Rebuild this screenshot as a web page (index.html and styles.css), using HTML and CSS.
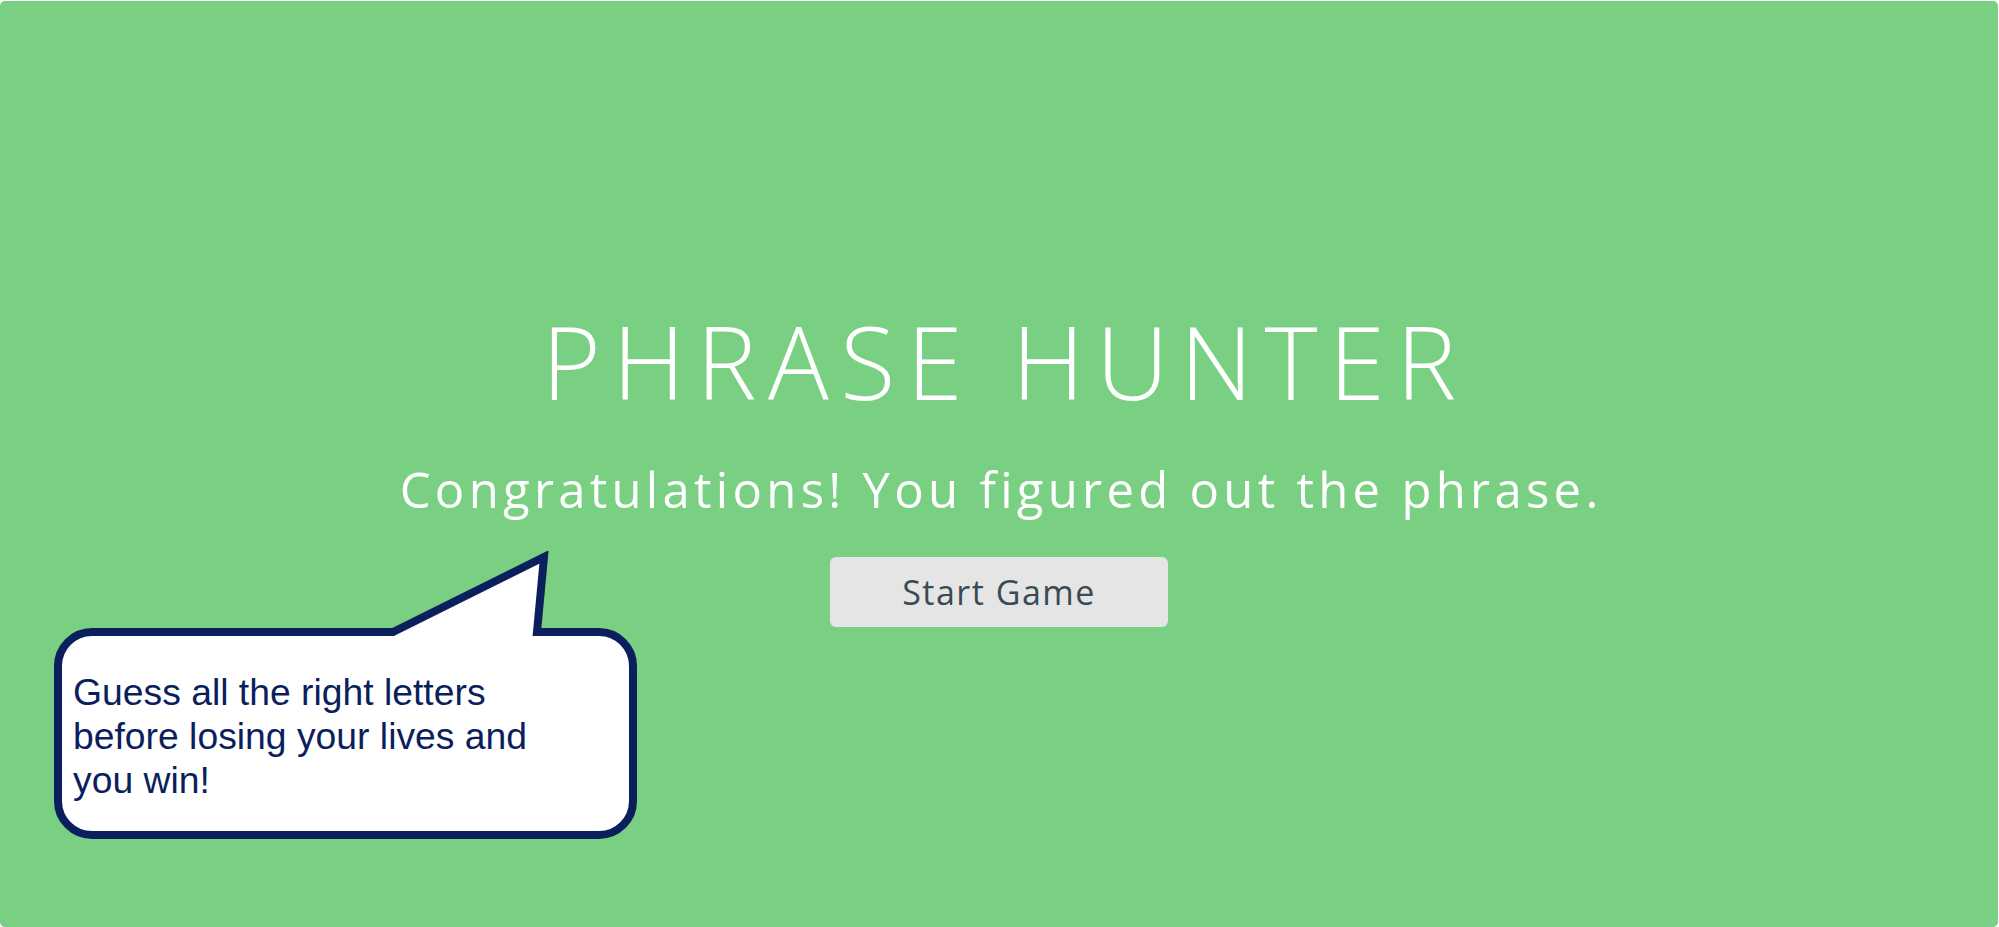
FILE: index.html
```html
<!DOCTYPE html>
<html lang="en">
<head>
<meta charset="utf-8">
<title>Phrase Hunter</title>
<link rel="stylesheet" href="styles.css">
</head>
<body>
  <div class="overlay win">
    <h2 class="title">PHRASE HUNTER</h2>
    <h1 class="game-over-message">Congratulations! You figured out the phrase.</h1>
    <button class="btn-reset">Start Game</button>
    <div class="bubble">
      <svg class="bubble-shape" width="583" height="288" viewBox="0 0 583 288" aria-hidden="true">
        <path d="M38 81 H339 L490 6 L483 81 H545 A34 34 0 0 1 579 115 V250 A34 34 0 0 1 545 284 H38 A34 34 0 0 1 4 250 V115 A34 34 0 0 1 38 81 Z" fill="#ffffff" stroke="#0b1f5d" stroke-width="8" stroke-linejoin="miter"/>
      </svg>
      <p class="bubble-text">Guess all the right letters before losing your lives and you win!</p>
    </div>
  </div>
</body>
</html>
```
FILE: styles.css
```css
html, body {
  margin: 0;
  padding: 0;
  background: #ffffff;
}

body {
  width: 1999px;
  height: 927px;
  overflow: hidden;
}

.overlay {
  position: relative;
  box-sizing: border-box;
  margin: 1px 1px 0 0;
  height: 926px;
  border-radius: 5px;
  background: #79d083;
  display: flex;
  flex-direction: column;
  align-items: center;
  padding-top: 310px;
  font-family: "Open Sans", "Noto Sans", sans-serif;
  color: #ffffff;
}

.title {
  margin: 0;
  font-size: 101px;
  line-height: 1;
  font-weight: 350;
  letter-spacing: 11.5px;
  text-indent: 11.5px;
  white-space: nowrap;
}

.game-over-message {
  margin: 53px 0 0;
  font-size: 49px;
  line-height: 1;
  font-weight: 400;
  letter-spacing: 4.3px;
  text-indent: 4.3px;
  white-space: nowrap;
}

.btn-reset {
  margin-top: 43px;
  width: 338px;
  height: 70px;
  border: none;
  border-radius: 6px;
  background: #e5e5e5;
  color: #394a54;
  font-family: "Open Sans", "Noto Sans", sans-serif;
  font-size: 34px;
  font-weight: 400;
  letter-spacing: 1.5px;
  line-height: 1;
  padding: 0;
}

.bubble {
  position: absolute;
  left: 54px;
  top: 550px;
  width: 583px;
  height: 288px;
}

.bubble-shape {
  position: absolute;
  left: 0;
  top: 0;
}

.bubble-text {
  position: relative;
  margin: 0;
  padding: 119px 0 0 19px;
  width: 480px;
  font-family: "Liberation Sans", Arial, sans-serif;
  font-size: 37.3px;
  line-height: 44px;
  color: #0b1f5d;
}
```
